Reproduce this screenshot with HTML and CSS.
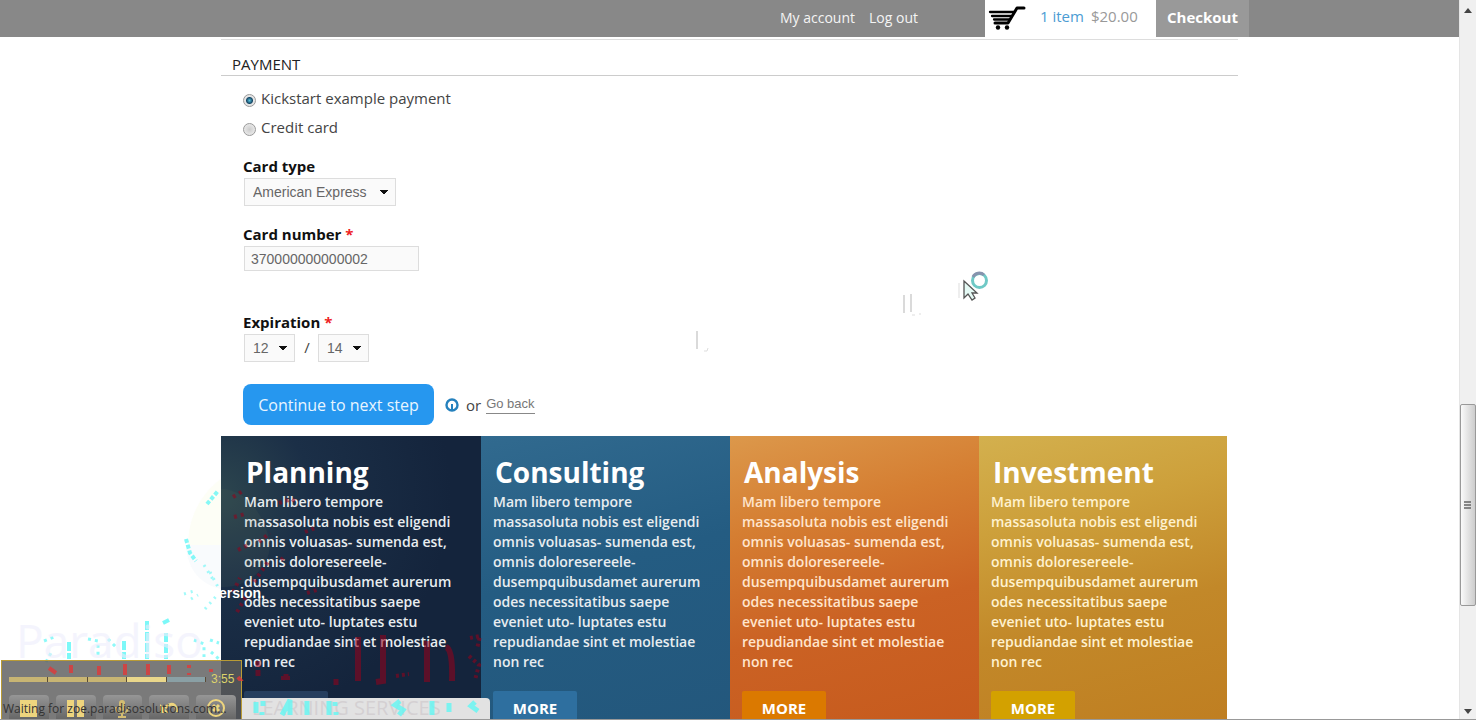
FILE: index.html
```html
<!DOCTYPE html>
<html lang="en">
<head>
<meta charset="utf-8">
<title>Checkout</title>
<link rel="stylesheet" href="styles.css">
</head>
<body>
<div class="page">
  <header class="topbar">
    <div class="topbar-inner">
      <nav class="account">
        <a href="#account">My account</a>
        <a href="#logout">Log out</a>
      </nav>
      <div class="cart">
        <svg class="cart-icon" width="38" height="26" viewBox="0 0 38 26" aria-hidden="true">
          <path d="M36 3H29L20 18H7" fill="none" stroke="#000" stroke-width="3" stroke-linecap="round" stroke-linejoin="round"/>
          <path d="M2 7H26M4 11H23M6 14.500H22" fill="none" stroke="#000" stroke-width="2.300" stroke-linecap="round"/>
          <circle cx="10" cy="22.500" r="2.200"/><circle cx="19" cy="22.500" r="2.200"/>
        </svg>
        <a class="cart-count" href="#cart">1 item</a>
        <span class="cart-total">$20.00</span>
      </div>
      <a class="checkout" href="#checkout">Checkout</a>
    </div>
  </header>

  <main class="content">
    <form class="payment">
      <h2 class="section-title">PAYMENT</h2>
      <div class="fields">
        <label class="option"><input type="radio" name="method" checked>Kickstart example payment</label>
        <label class="option"><input type="radio" name="method">Credit card</label>

        <label class="label card-type" for="type">Card type</label>
        <select class="control type" id="type"><option>American Express</option></select>

        <label class="label card-number" for="number">Card number <span class="required">*</span></label>
        <input class="control number" id="number" type="text" value="370000000000002">

        <label class="label expiration" for="month">Expiration <span class="required">*</span></label>
        <div class="dates">
          <select class="control short" id="month"><option>12</option></select>
          <span>/</span>
          <select class="control short" aria-label="Expiration year"><option>14</option></select>
        </div>

        <div class="actions">
          <button class="continue" type="button">Continue to next step</button>
          <svg width="14" height="14" viewBox="0 0 14 14" aria-hidden="true">
            <circle cx="7" cy="7" r="5.500" fill="#fff" stroke="#2581bd" stroke-width="2.400"/>
            <path d="M7 6V12" stroke="#2581bd" stroke-width="2"/>
          </svg>
          <span class="or">or</span>
          <a class="back" href="#back">Go back</a>
        </div>
      </div>
    </form>

    <div class="panels">
      <section class="panel planning">
        <h2>Planning</h2>
        <p>Mam libero tempore<br>massasoluta nobis est eligendi<br>omnis voluasas- sumenda est,<br>omnis doloresereele-<br>dusempquibusdamet aurerum<br>odes necessitatibus saepe<br>eveniet uto- luptates estu<br>repudiandae sint et molestiae<br>non rec</p>
        <span class="more blank"></span>
      </section>
      <section class="panel consulting">
        <h2>Consulting</h2>
        <p>Mam libero tempore<br>massasoluta nobis est eligendi<br>omnis voluasas- sumenda est,<br>omnis doloresereele-<br>dusempquibusdamet aurerum<br>odes necessitatibus saepe<br>eveniet uto- luptates estu<br>repudiandae sint et molestiae<br>non rec</p>
        <a class="more" href="#consulting">MORE</a>
      </section>
      <section class="panel analysis">
        <h2>Analysis</h2>
        <p>Mam libero tempore<br>massasoluta nobis est eligendi<br>omnis voluasas- sumenda est,<br>omnis doloresereele-<br>dusempquibusdamet aurerum<br>odes necessitatibus saepe<br>eveniet uto- luptates estu<br>repudiandae sint et molestiae<br>non rec</p>
        <a class="more" href="#analysis">MORE</a>
      </section>
      <section class="panel investment">
        <h2>Investment</h2>
        <p>Mam libero tempore<br>massasoluta nobis est eligendi<br>omnis voluasas- sumenda est,<br>omnis doloresereele-<br>dusempquibusdamet aurerum<br>odes necessitatibus saepe<br>eveniet uto- luptates estu<br>repudiandae sint et molestiae<br>non rec</p>
        <a class="more" href="#investment">MORE</a>
      </section>
    </div>
  </main>
</div>

<div class="scrollbar" aria-hidden="true">
  <svg width="8" height="5" viewBox="0 0 8 5"><path d="M4 0L8 5H0Z" fill="#444"/></svg>
  <div class="track"><div class="thumb"><svg width="8" height="9" viewBox="0 0 8 9"><path d="M0 1H7M0 4H7M0 7H7" stroke="#666" stroke-width="1.600"/></svg></div></div>
  <svg width="8" height="5" viewBox="0 0 8 5"><path d="M0 0H8L4 5Z" fill="#444"/></svg>
</div>

<svg class="logo-ghost" width="500" height="250" viewBox="0 0 500 250" aria-hidden="true">
  <path d="M221 10C200 25 188 50 188 76H221Z" fill="#fdfef6"/>
  <path d="M186 76H221V120C200 115 187 100 186 76Z" fill="#f9fbfd"/>
  <path d="M221 20C245 20 265 45 270 75C270 100 245 120 221 118Z" fill="#65705e" opacity=".12"/>
  <g stroke="#45f5f5" fill="none">
    <path d="M186 70L190 84L196 92M207 35L218 22" stroke-width="4" stroke-dasharray="4 2" opacity=".65"/>
    <path d="M204 96L214 112M210 103L218 118M184 125L194 122M205 140L218 125M191 130L198 126" stroke-width="3" stroke-dasharray="2 5" opacity=".5"/>
    <path d="M69 173V190M124 172V190M147 152V190M166 164V190M163 154L169 151" stroke-width="4" stroke-dasharray="9 2" opacity=".7"/>
    <path d="M44 172L54 168M46 193L52 182M88 170L98 172V188M108 170L117 179M194 171L204 175V188M210 171L219 174M211 183L219 190" stroke-width="3" stroke-dasharray="3 4" opacity=".6"/>
  </g>
  <g stroke="#98001a" fill="none" opacity=".55">
    <path d="M233 28L243 22M234 48L245 45M279 34L292 30L298 35M259 73L270 64M305 63L315 59M238 81L248 76M281 91L285 87M254 113L270 90M233 123L240 109M237 143L247 126M307 124L320 120" stroke-width="4" stroke-dasharray="3 4"/>
    <path d="M258 192V210M286 205V214M336 210V218" stroke-width="5" stroke-dasharray="6 3"/>
    <path d="M358 168V212M383 166V212L376 213M427 172V213M446 178Q453 180 452 212" stroke-width="6"/>
    <path d="M281 209H293M396 207L409 205M470 169L480 167L477 180M469 187L479 196L475 211" stroke-width="4" stroke-dasharray="3 3"/>
  </g>
</svg>
<div class="brand-ghost" aria-hidden="true">Paradiso</div>
<div class="version">ersion,</div>
<div class="services">
  <span>LEARNING SERVICES</span>
  <svg width="244" height="20" viewBox="0 0 244 20" aria-hidden="true"><path d="M14 4V15M21 3V8M20 14V17M40 17L48 2V17M65 3V17M87 3V17M93 4V8M94 14V17M158 3L153 7L161 12L157 17M190 3V17M207 5V14M233 4L229 8L236 13" fill="none" stroke="#62f7f4" stroke-width="5" opacity=".8"/></svg>
</div>

<div class="recorder">
  <div class="timeline">
    <span class="bar"><i></i><i></i><i></i><i></i><i class="rest"></i></span>
    <span class="time">3:55</span>
  </div>
  <div class="recorder-buttons">
    <button type="button" aria-label="Stop"><svg width="24" height="22" viewBox="0 0 24 22"><path d="M3 4H20V21H3Z" fill="#eed57e"/></svg></button>
    <button type="button" aria-label="Pause"><svg width="24" height="22" viewBox="0 0 24 22"><path d="M3 4H10V21H3ZM13 4H20V21H13Z" fill="#eed57e"/></svg></button>
    <button type="button" aria-label="Microphone"><svg width="24" height="22" viewBox="0 0 24 22"><rect x="9" y="4" width="6" height="11" rx="3" fill="#d4bd72"/><path d="M6 11Q6 17 12 17Q18 17 18 11M12 17V21M8 21H16" fill="none" stroke="#d4bd72" stroke-width="2"/></svg></button>
    <button type="button" aria-label="Undo"><svg width="24" height="22" viewBox="0 0 24 22"><path d="M8 12Q18 3 20 16" fill="none" stroke="#eed57e" stroke-width="3"/><path d="M3 8V17H12Z" fill="#eed57e"/></svg></button>
    <button type="button" aria-label="Cancel"><svg width="24" height="22" viewBox="0 0 24 22"><circle cx="12" cy="12" r="8" fill="none" stroke="#eed57e" stroke-width="2"/><path d="M9 9L15 15M15 9L9 15" stroke="#eed57e" stroke-width="3"/></svg></button>
  </div>
  <svg class="marks" width="242" height="20" viewBox="0 0 242 20" aria-hidden="true"><path d="M47 7L54 12M69 4V12M97 5V14M123 3V14M146 3V14M167 4V13M187 4V7M187 12V14M209 8V11M236 16L240 21" fill="none" stroke="#e03a3a" stroke-width="4" opacity=".8"/></svg>
  <div class="status">Waiting for zoe.paradisosolutions.com...</div>
</div>

<svg class="artifacts" width="310" height="100" viewBox="0 0 310 100" aria-hidden="true">
  <path d="M7 71V89M214 35V53M221 34V52" stroke="#b5b5b5" fill="none"/>
  <path d="M14 91H17L18 88M222 55H225M229 54H231M269 23V38" stroke="#ddd" fill="none"/>
  <circle cx="289.500" cy="20.500" r="7" fill="#fff" stroke="#6fc9c6" stroke-width="3"/>
  <path d="M283 17A7 7 0 0 1 294 15" stroke="#8793ad" stroke-width="3" fill="none"/>
  <path d="M274 21V38L278 34L282 40L285 38L282 33H287Z" fill="#e5faf5" stroke="#555" stroke-width="1.300"/>
</svg>
</body>
</html>
```
FILE: styles.css
```css
* { box-sizing: border-box; }
body {
  margin: 0;
  height: 100vh;
  display: flex;
  overflow: hidden;
  position: relative;
  background: #fff;
  color: #444;
  font-family: "Open Sans", "Noto Sans", sans-serif;
  font-size: 15px;
  border-bottom: 1px solid #999;
}
a { color: inherit; text-decoration: none; }
h2, p { margin: 0; }
.page { flex: 1; min-width: 0; }

.topbar { background: #888; color: #f4f4f4; }
.topbar-inner {
  max-width: 1039px;
  height: 37px;
  margin: 0 auto;
  display: flex;
  justify-content: flex-end;
}
.account {
  display: flex;
  gap: 14px;
  padding: 8px 67px 0 0;
  font-size: 14px;
  line-height: 20px;
}
.cart {
  width: 171px;
  display: flex;
  padding: 5px 0 0 3px;
  background: #fff;
  line-height: 23px;
}
.cart-icon { margin-right: 14px; }
.cart-count { color: #4c9cd3; margin-right: 7px; }
.cart-total { color: #999; }
.checkout {
  width: 93px;
  padding: 7px 0 0 11px;
  background: #999;
  color: #fff;
  font-size: 15px;
  font-weight: 700;
  line-height: 20px;
}

.content { max-width: 1017px; margin: 0 auto; }
.payment { margin-top: 2px; border-top: 1px solid #ddd; }
.section-title {
  padding: 13px 0 0 11px;
  height: 36px;
  border-bottom: 1px solid #ccc;
  font-size: 15px;
  line-height: 22px;
  font-weight: 400;
  color: #222;
}
.fields {
  padding: 7px 0 11px 22px;
  display: flex;
  flex-direction: column;
  align-items: flex-start;
}
.option {
  display: flex;
  align-items: center;
  height: 29px;
  line-height: 28px;
}
.option input {
  appearance: none;
  width: 13px;
  height: 13px;
  margin: 5px 5px 0 0;
  border: 1px solid #999;
  border-radius: 50%;
  background: radial-gradient(circle, #ccc, #f3f3f3);
}
.option input:checked { background: radial-gradient(circle, #59c4df 0, #154665 3px, #e5e5e5 4px); }
.label {
  display: block;
  color: #111;
  font-size: 15px;
  line-height: 20px;
  font-weight: 700;
}
.card-type { margin-top: 15px; }
.card-number { margin-top: 18px; }
.expiration { margin-top: 41px; }
.required { color: #e22; }
.control {
  height: 28px;
  margin: 2px 0 0 1px;
  padding: 0 8px;
  border: 1px solid #ddd;
  border-radius: 0;
  background: #fafafa;
  color: #666;
  font-family: "Liberation Sans", Arial, sans-serif;
  font-size: 14px;
}
select.control {
  appearance: none;
  background-image: linear-gradient(to bottom right, #111 50%, transparent 50%), linear-gradient(to bottom left, #111 50%, transparent 50%);
  background-size: 4px 5px;
  background-position: right 7px center, right 11px center;
  background-repeat: no-repeat;
}
.type { width: 152px; }
.number { width: 175px; height: 25px; padding: 0 6px; }
.short { width: 51px; }
.dates { display: flex; align-items: center; }
.dates span { width: 22px; padding-left: 2px; text-align: center; }
.actions { display: flex; align-items: center; margin-top: 22px; }
.continue {
  width: 191px;
  height: 41px;
  margin-right: 11px;
  padding: 0;
  border: 0;
  border-radius: 8px;
  background: #2697ef;
  color: #e9f5ff;
  font: 400 16px "Open Sans", sans-serif;
}
.or { margin: 0 5px 0 7px; }
.back {
  color: #777;
  border-bottom: 1px solid #888;
  font: 13px/18px "Liberation Sans", Arial, sans-serif;
}

.panels {
  display: grid;
  grid-template-columns: 260fr 249fr 249fr 248fr;
  margin-right: 11px;
}
.panel {
  min-height: 290px;
  padding: 16px 0 0 12px;
  color: #e8edf0;
  font-family: "Trebuchet MS", "Open Sans", sans-serif;
}
.panel h2 {
  padding-left: 2px;
  color: #fff;
  font-size: 28px;
  line-height: 40px;
  font-weight: 700;
}
.panel p {
  height: 199px;
  font-size: 14px;
  line-height: 20px;
  font-weight: 600;
}
.planning { padding-left: 23px; background: radial-gradient(circle at 0 20%, #2c454e 0, #1b2f47 90px, #14243c 230px); }
.consulting { background: linear-gradient(165deg, #316a8f 0, #245c82 45%, #23577c 100%); }
.analysis { background: linear-gradient(165deg, #dc984b 0, #d57e32 28%, #cb6224 60%, #c65a1d 100%); color: #ffe5cd; }
.investment { background: linear-gradient(165deg, #d3b04e 0, #cda03b 28%, #c28829 60%, #bf7e21 100%); color: #fff2cf; }
.more {
  display: block;
  width: 84px;
  height: 36px;
  border-radius: 2px 2px 0 0;
  background: #2e6f9f;
  color: #fff;
  font-size: 15px;
  line-height: 34px;
  font-weight: 700;
  text-align: center;
}
.blank { background: #263e5e; }
.analysis .more { background: #db7900; }
.investment .more { background: #d3a100; }

.scrollbar {
  width: 17px;
  display: flex;
  flex-direction: column;
  align-items: center;
  padding: 8px 0 5px;
  border-left: 1px solid #e5e5e5;
  background: #f0f0f0;
}
.track { flex: 1; width: 16px; display: flex; flex-direction: column; justify-content: flex-end; padding-bottom: 103px; }
.thumb {
  height: 34%;
  display: flex;
  align-items: center;
  justify-content: center;
  border: 1px solid #999;
  border-radius: 2px;
  background: linear-gradient(to right, #fafafa, #ccc);
}

.logo-ghost { position: absolute; left: 0; bottom: 0; pointer-events: none; }
.brand-ghost {
  position: absolute;
  left: 16px;
  bottom: 54px;
  color: #eeeefc;
  font-size: 46px;
  line-height: 50px;
  opacity: .6;
}
.version {
  position: absolute;
  left: 219px;
  bottom: 116px;
  color: #fff;
  font: 700 14px/20px "Liberation Sans", Arial, sans-serif;
}
.services {
  position: absolute;
  left: 242px;
  bottom: 0;
  width: 248px;
  height: 21px;
  border-radius: 0 4px 0 0;
  background: #e2e2e2;
  color: #d4d0d2;
  font-size: 20px;
  line-height: 20px;
}
.services span { display: block; padding-left: 10px; white-space: nowrap; }
.services svg { position: absolute; left: 0; top: 0; }
.recorder {
  position: absolute;
  left: 1px;
  bottom: 0;
  width: 241px;
  height: 59px;
  padding: 9px 5px 0 7px;
  border: 1px solid #b99b36;
  border-bottom: 0;
  background: rgba(93, 93, 93, .82);
}
.timeline { display: flex; align-items: center; gap: 5px; height: 18px; }
.bar { display: flex; width: 197px; height: 5px; }
.bar i { flex: 1; border-right: 1px solid #5a4b36; background: #c8b573; }
.bar i:nth-child(4) { background: #ead78b; }
.bar .rest { background: #8aa0a5; }
.time { color: #ddd36b; font: 12px/18px "Liberation Sans", Arial, sans-serif; }
.recorder-buttons { display: flex; gap: 7px; margin: 7px 0 0 0; }
.recorder-buttons button {
  width: 41px;
  height: 24px;
  padding: 1px 0 0;
  border: 0;
  border-radius: 4px 4px 0 0;
  background: linear-gradient(#969696, #676767);
}
.marks { position: absolute; left: 0; top: 0; }
.status {
  position: absolute;
  left: 1px;
  bottom: 0;
  color: #333;
  font: 12px/20px "Open Sans", sans-serif;
  white-space: nowrap;
}
.artifacts { position: absolute; left: 690px; top: 260px; pointer-events: none; }
```
